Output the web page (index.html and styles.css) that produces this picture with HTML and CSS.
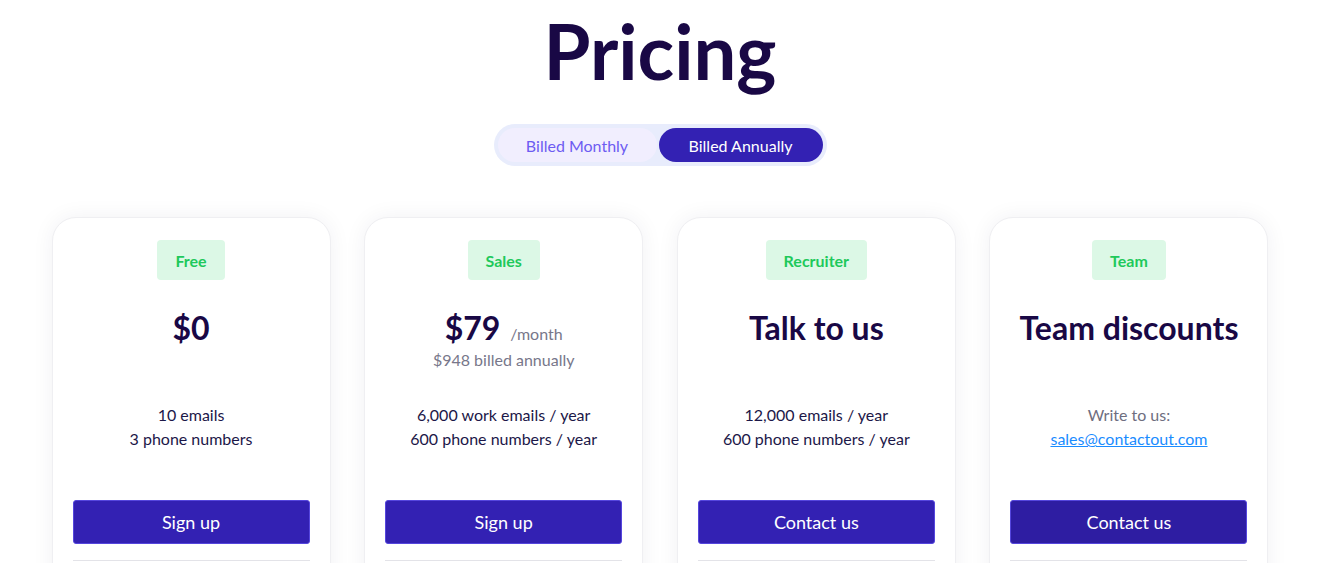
FILE: index.html
```html
<!DOCTYPE html>
<html lang="en">
<head>
<meta charset="utf-8">
<title>Pricing</title>
<link rel="stylesheet" href="styles.css">
</head>
<body>
<main class="page">
  <h1 class="title">Pricing</h1>
  <div class="toggle-wrap">
    <div class="toggle">
      <span class="toggle-opt">Billed Monthly</span>
      <span class="toggle-opt active">Billed Annually</span>
    </div>
  </div>
  <section class="plans">
    <article class="card">
      <span class="badge">Free</span>
      <div class="price-block">
        <div class="price">$0</div>
      </div>
      <div class="features">
        <div>10 emails</div>
        <div>3 phone numbers</div>
      </div>
      <a class="btn" href="#">Sign up</a>
      <hr class="divider">
    </article>
    <article class="card">
      <span class="badge">Sales</span>
      <div class="price-block">
        <div class="price">$79 <span class="per">/month</span></div>
        <div class="billed">$948 billed annually</div>
      </div>
      <div class="features">
        <div>6,000 work emails / year</div>
        <div>600 phone numbers / year</div>
      </div>
      <a class="btn" href="#">Sign up</a>
      <hr class="divider">
    </article>
    <article class="card">
      <span class="badge">Recruiter</span>
      <div class="price-block">
        <div class="price">Talk to us</div>
      </div>
      <div class="features">
        <div>12,000 emails / year</div>
        <div>600 phone numbers / year</div>
      </div>
      <a class="btn" href="#">Contact us</a>
      <hr class="divider">
    </article>
    <article class="card">
      <span class="badge">Team</span>
      <div class="price-block">
        <div class="price">Team discounts</div>
      </div>
      <div class="features muted">
        <div>Write to us:</div>
        <div><a class="mail" href="#">sales@contactout.com</a></div>
      </div>
      <a class="btn btn-dark" href="#">Contact us</a>
      <hr class="divider">
    </article>
  </section>
</main>
</body>
</html>
```
FILE: styles.css
```css
html, body {
  margin: 0;
  padding: 0;
  background: #ffffff;
}
body {
  font-family: "Lato", "Liberation Sans", sans-serif;
  color: #1c1748;
  overflow: hidden;
}
.page {
  padding: 7px 13px 0 0;
}
.title {
  margin: 0;
  text-align: center;
  font-size: 76px;
  line-height: 88px;
  font-weight: 700;
  color: #190845;
}
.toggle-wrap {
  display: flex;
  justify-content: center;
  margin-top: 29px;
}
.toggle {
  display: flex;
  gap: 2px;
  padding: 4px;
  background: #e8ecfc;
  border-radius: 21px;
}
.toggle-opt {
  display: flex;
  align-items: center;
  justify-content: center;
  height: 34px;
  border-radius: 17px;
  font-size: 16px;
  color: #6d5cf2;
  background: #f1eefe;
  width: 159px;
}
.toggle-opt.active {
  background: #3321b3;
  color: #ffffff;
  width: 164px;
}
.plans {
  display: grid;
  grid-template-columns: repeat(4, 279px);
  column-gap: 33.67px;
  justify-content: center;
  margin-top: 51px;
}
.card {
  display: flex;
  flex-direction: column;
  align-items: center;
  padding: 22px 20px 60px;
  background: #ffffff;
  border: 1px solid #efeff2;
  border-radius: 24px;
  box-shadow: 0 0 22px rgba(20, 20, 60, 0.06);
}
.badge {
  display: flex;
  align-items: center;
  height: 40px;
  padding: 0 18px;
  border-radius: 4px;
  background: #dcf8e6;
  color: #1ec95b;
  font-size: 16px;
  font-weight: 700;
}
.price-block {
  margin-top: 28px;
  height: 64px;
  text-align: center;
}
.price {
  font-size: 32px;
  line-height: 40px;
  font-weight: 700;
  color: #190845;
}
.per {
  font-size: 16px;
  line-height: 1;
  font-weight: 400;
  color: #77778a;
  margin-left: 2px;
}
.billed {
  font-size: 16px;
  line-height: 24px;
  color: #77778a;
}
.features {
  margin-top: 31px;
  height: 48px;
  font-size: 16px;
  line-height: 24px;
  text-align: center;
  color: #1c1748;
}
.features.muted {
  color: #6e6e80;
}
.mail {
  color: #1a8cff;
  text-decoration: underline;
}
.btn {
  box-sizing: border-box;
  display: flex;
  align-items: center;
  justify-content: center;
  align-self: stretch;
  margin-top: 49px;
  height: 44px;
  background: #3321b3;
  border: 1px solid #5546dd;
  border-radius: 3px;
  color: #ffffff;
  font-size: 18px;
  text-decoration: none;
}
.btn-dark {
  background: #2e1da2;
}
.divider {
  align-self: stretch;
  margin: 16px 0 0;
  border: 0;
  border-top: 1px solid #e3e3e8;
}
```
